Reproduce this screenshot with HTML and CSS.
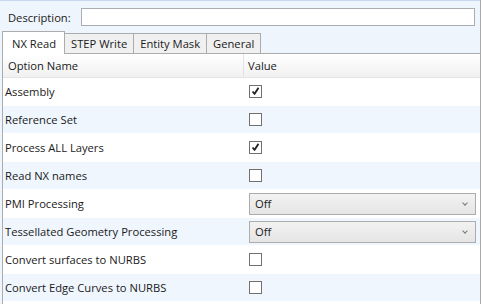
FILE: index.html
```html
<!DOCTYPE html>
<html>
<head>
  <title>Export Options</title>
  <link rel="stylesheet" href="styles.css">
</head>
<body>
  <div class="window">
    <div class="top">
      <div class="desc">
        <label class="desc-label">Description:</label>
        <div class="desc-box"></div>
      </div>
      <div class="tabs">
        <span class="tab active">NX Read</span>
        <span class="tab">STEP Write</span>
        <span class="tab">Entity Mask</span>
        <span class="tab">General</span>
      </div>
    </div>

    <div class="panel">
      <div class="grid-head">
        <span class="col-name">Option Name</span>
        <span class="col-value">Value</span>
      </div>

      <div class="row">
        <span class="cell-name">Assembly</span>
        <span class="cell-value"><span class="check on"></span></span>
      </div>
      <div class="row alt">
        <span class="cell-name">Reference Set</span>
        <span class="cell-value"><span class="check"></span></span>
      </div>
      <div class="row">
        <span class="cell-name">Process ALL Layers</span>
        <span class="cell-value"><span class="check on"></span></span>
      </div>
      <div class="row alt">
        <span class="cell-name">Read NX names</span>
        <span class="cell-value"><span class="check"></span></span>
      </div>
      <div class="row">
        <span class="cell-name">PMI Processing</span>
        <span class="cell-value"><span class="combo">Off</span></span>
      </div>
      <div class="row alt">
        <span class="cell-name">Tessellated Geometry Processing</span>
        <span class="cell-value"><span class="combo">Off</span></span>
      </div>
      <div class="row">
        <span class="cell-name">Convert surfaces to NURBS</span>
        <span class="cell-value"><span class="check"></span></span>
      </div>
      <div class="row alt">
        <span class="cell-name">Convert Edge Curves to NURBS</span>
        <span class="cell-value"><span class="check"></span></span>
      </div>
    </div>
  </div>
</body>
</html>
```

FILE: styles.css
```css
/* Options dialog */

html, body {
  margin: 0;
  padding: 0;
  background: #fff;
}

body {
  font-family: "Open Sans", "Noto Sans", sans-serif;
  font-size: 11.2px;
  color: #1a1a1a;
}

.window {
  width: 480px;
  height: 304px;
  overflow: hidden;
  border-right: 1px solid #a9a9a9;
  background: #eef5fd;
}

.top {
  border-top: 1px solid #c6d8ee;
  padding: 7px 5px 0 2px;
}

.desc {
  display: flex;
  align-items: center;
  height: 18px;
}

.desc-label {
  padding-left: 6px;
  width: 73px;
}

.desc-box {
  flex: 1;
  height: 16px;
  background: #fff;
  border: 1px solid #abadb3;
}

.tabs {
  display: flex;
  align-items: flex-end;
  margin-top: 4px;
  height: 23px;
}

.tab {
  display: flex;
  align-items: center;
  height: 19px;
  padding: 0 6px;
  background: #f0f0f0;
  border: 1px solid #acacac;
  border-bottom: none;
  margin-left: -1px;
}

.tab.active {
  position: relative;
  z-index: 1;
  height: 22px;
  margin-left: 0;
  margin-bottom: -1px;
  padding: 0 8px 0 9px;
  background: #fff;
}

.panel {
  margin-left: 2px;
  height: 260px;
  background: #fff;
  border-top: 1px solid #acacac;
  border-left: 1px solid #acacac;
}

.grid-head {
  display: flex;
  height: 23px;
  background: linear-gradient(#ffffff, #f1f1f1);
  border-bottom: 1px solid #e3e3e3;
}

.col-name,
.col-value {
  display: flex;
  align-items: center;
}

.col-name {
  width: 235px;
  padding-left: 5px;
  border-right: 1px solid #e3e3e3;
}

.col-value {
  padding-left: 4px;
}

.row {
  display: flex;
  align-items: center;
  height: 27px;
  border-bottom: 1px solid #fff;
}

.row.alt {
  background: #eff6fe;
}

.cell-name {
  width: 239px;
  padding-left: 2px;
}

.cell-value {
  display: flex;
  align-items: center;
  padding-left: 5px;
}

.check {
  width: 13px;
  height: 13px;
  border: 1px solid #707070;
  background: #fff;
  box-sizing: border-box;
  position: relative;
}

.check.on::after {
  content: "";
  position: absolute;
  left: 2px;
  top: 1px;
  width: 7px;
  height: 8px;
  background: no-repeat center / 7px 8px url("data:image/svg+xml;utf8,<svg xmlns='http://www.w3.org/2000/svg' viewBox='0 0 7 8'><path d='M0.5 4.5 L2.6 6.8 L6.5 0.8' fill='none' stroke='%23222' stroke-width='1.8'/></svg>");
}

.combo {
  display: flex;
  align-items: center;
  width: 220px;
  height: 20px;
  padding-left: 5px;
  border: 1px solid #acacac;
  background: linear-gradient(#f2f2f2, #e5e5e5);
  position: relative;
}

.combo::after {
  content: "";
  position: absolute;
  right: 8px;
  top: 7px;
  width: 3px;
  height: 3px;
  border-right: 1px solid #777;
  border-bottom: 1px solid #777;
  transform: rotate(45deg);
}
```
